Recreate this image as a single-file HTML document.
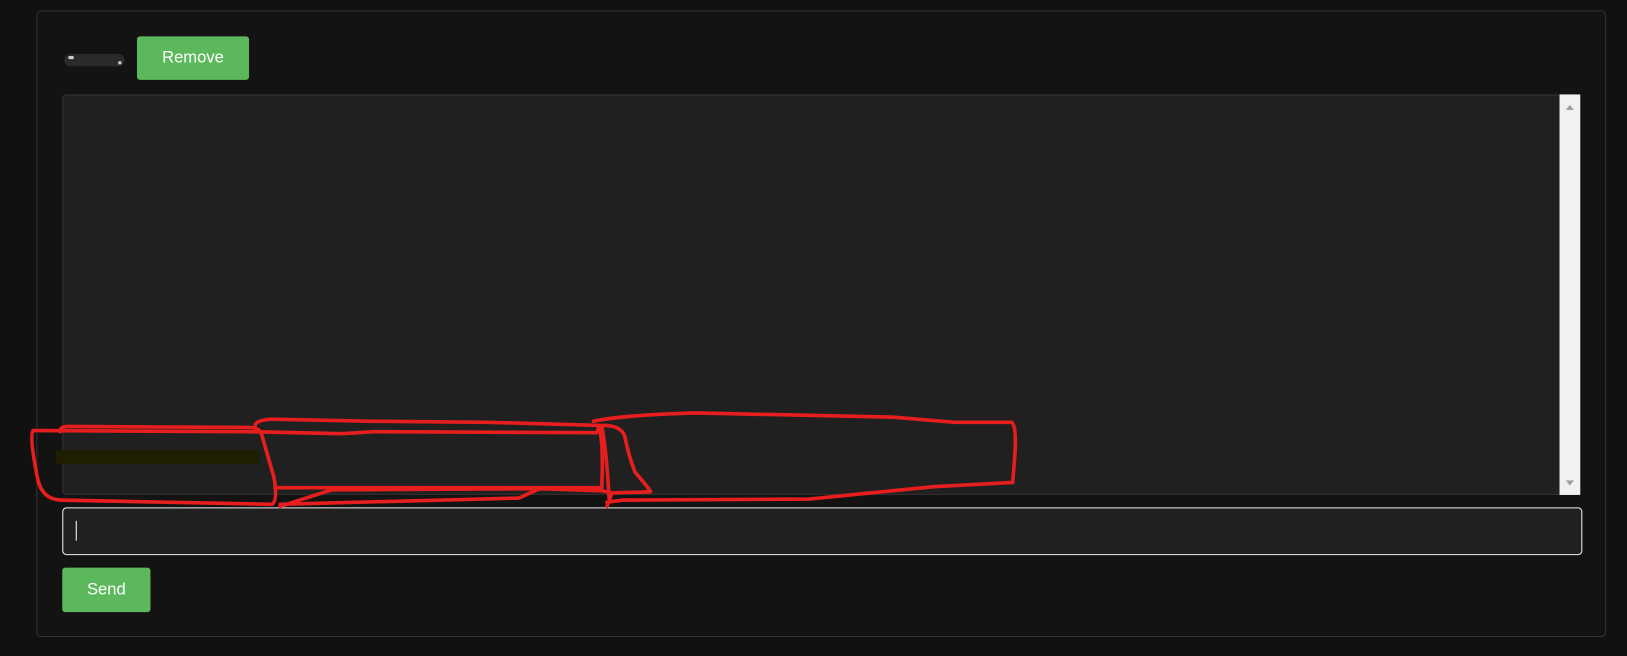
<!DOCTYPE html>
<html><head><meta charset="utf-8"><style>
html,body{margin:0;padding:0;width:1627px;height:656px;background:#111;overflow:hidden;font-family:"Liberation Sans",Arial,sans-serif}
#w{position:absolute;left:0;top:0;width:1568px;height:632px;transform:scale(1.0376);transform-origin:0 0}
.panel{position:absolute;left:35px;top:10px;width:1513px;height:604px;background:#131313;border:1px solid #333;border-radius:5px;box-sizing:border-box}
.btn{position:absolute;background:#5cb85c;color:#fff;border-radius:3px;font-size:16px;text-align:center}
.ta{position:absolute;left:60px;top:91px;width:1463px;height:386px;background:#202020;border:1px solid #333;border-radius:4px;box-sizing:border-box}
.sb{position:absolute;left:1503px;top:91px;width:20px;height:386px;background:#f1f1f1}
.inp{position:absolute;left:60px;top:489px;width:1465px;height:46px;background:#202020;border:1px solid #eee;border-radius:4px;box-sizing:border-box}
</style></head><body><div id="w">
<div class="panel"></div>
<div style="position:absolute;left:62px;top:52px;width:58px;height:12px;background:#2a2a2a;border-radius:6px"></div>
<div style="position:absolute;left:66px;top:54px;width:5px;height:3px;background:#ccc"></div>
<div style="position:absolute;left:114px;top:59px;width:3px;height:3px;background:#ccc"></div>
<div class="btn" style="left:132px;top:35px;width:108px;height:42px;line-height:42px">Remove</div>
<div class="ta"></div>
<div class="sb"></div>
<svg style="position:absolute;left:1503px;top:91px" width="20" height="386"><polygon points="6,15 14,15 10,10" fill="#a0a0a0"/><polygon points="6,372 14,372 10,377" fill="#a0a0a0"/></svg>
<div style="position:absolute;left:54px;top:434px;width:196px;height:13px;background:#1f1f00"></div>
<div class="inp"></div>
<div style="position:absolute;left:73px;top:502px;width:1px;height:19px;background:#fff"></div>
<div class="btn" style="left:60px;top:547px;width:85px;height:43px;line-height:43px">Send</div>
<svg style="position:absolute;left:0;top:0" width="1568" height="632" fill="none" stroke="#e61e1e" stroke-width="3.5" stroke-linecap="round" stroke-linejoin="round">
<path d="M32,415 Q28,420 36,460 Q40,482 60,482 L262,486 Q268,483 264,460 L252,418 Q250,412 240,412 L65,411 Q58,411 58,416"/>
<path d="M32,415 L240,416 L330,418 L360,416 L575,417 L578,410 L470,407 L360,406 L262,404 Q246,405 246,410"/>
<path d="M575,410 Q582,412 580,470 L265,470"/>
<path d="M270,488 L320,472 L520,471 L580,473 L590,475 L585,488"/>
<path d="M520,471 L500,480 L270,486"/>
<path d="M580,410 Q585,440 587,480"/>
<path d="M572,406 Q600,400 670,398 L860,402 L920,407 L975,407 Q980,410 978,440 L976,465 L900,469 L840,475 L780,481 L600,482 L585,484"/>
<path d="M582,410 Q598,410 602,420 Q606,440 612,455 Q625,470 627,474 L592,475"/>
</svg>
</div></body></html>
